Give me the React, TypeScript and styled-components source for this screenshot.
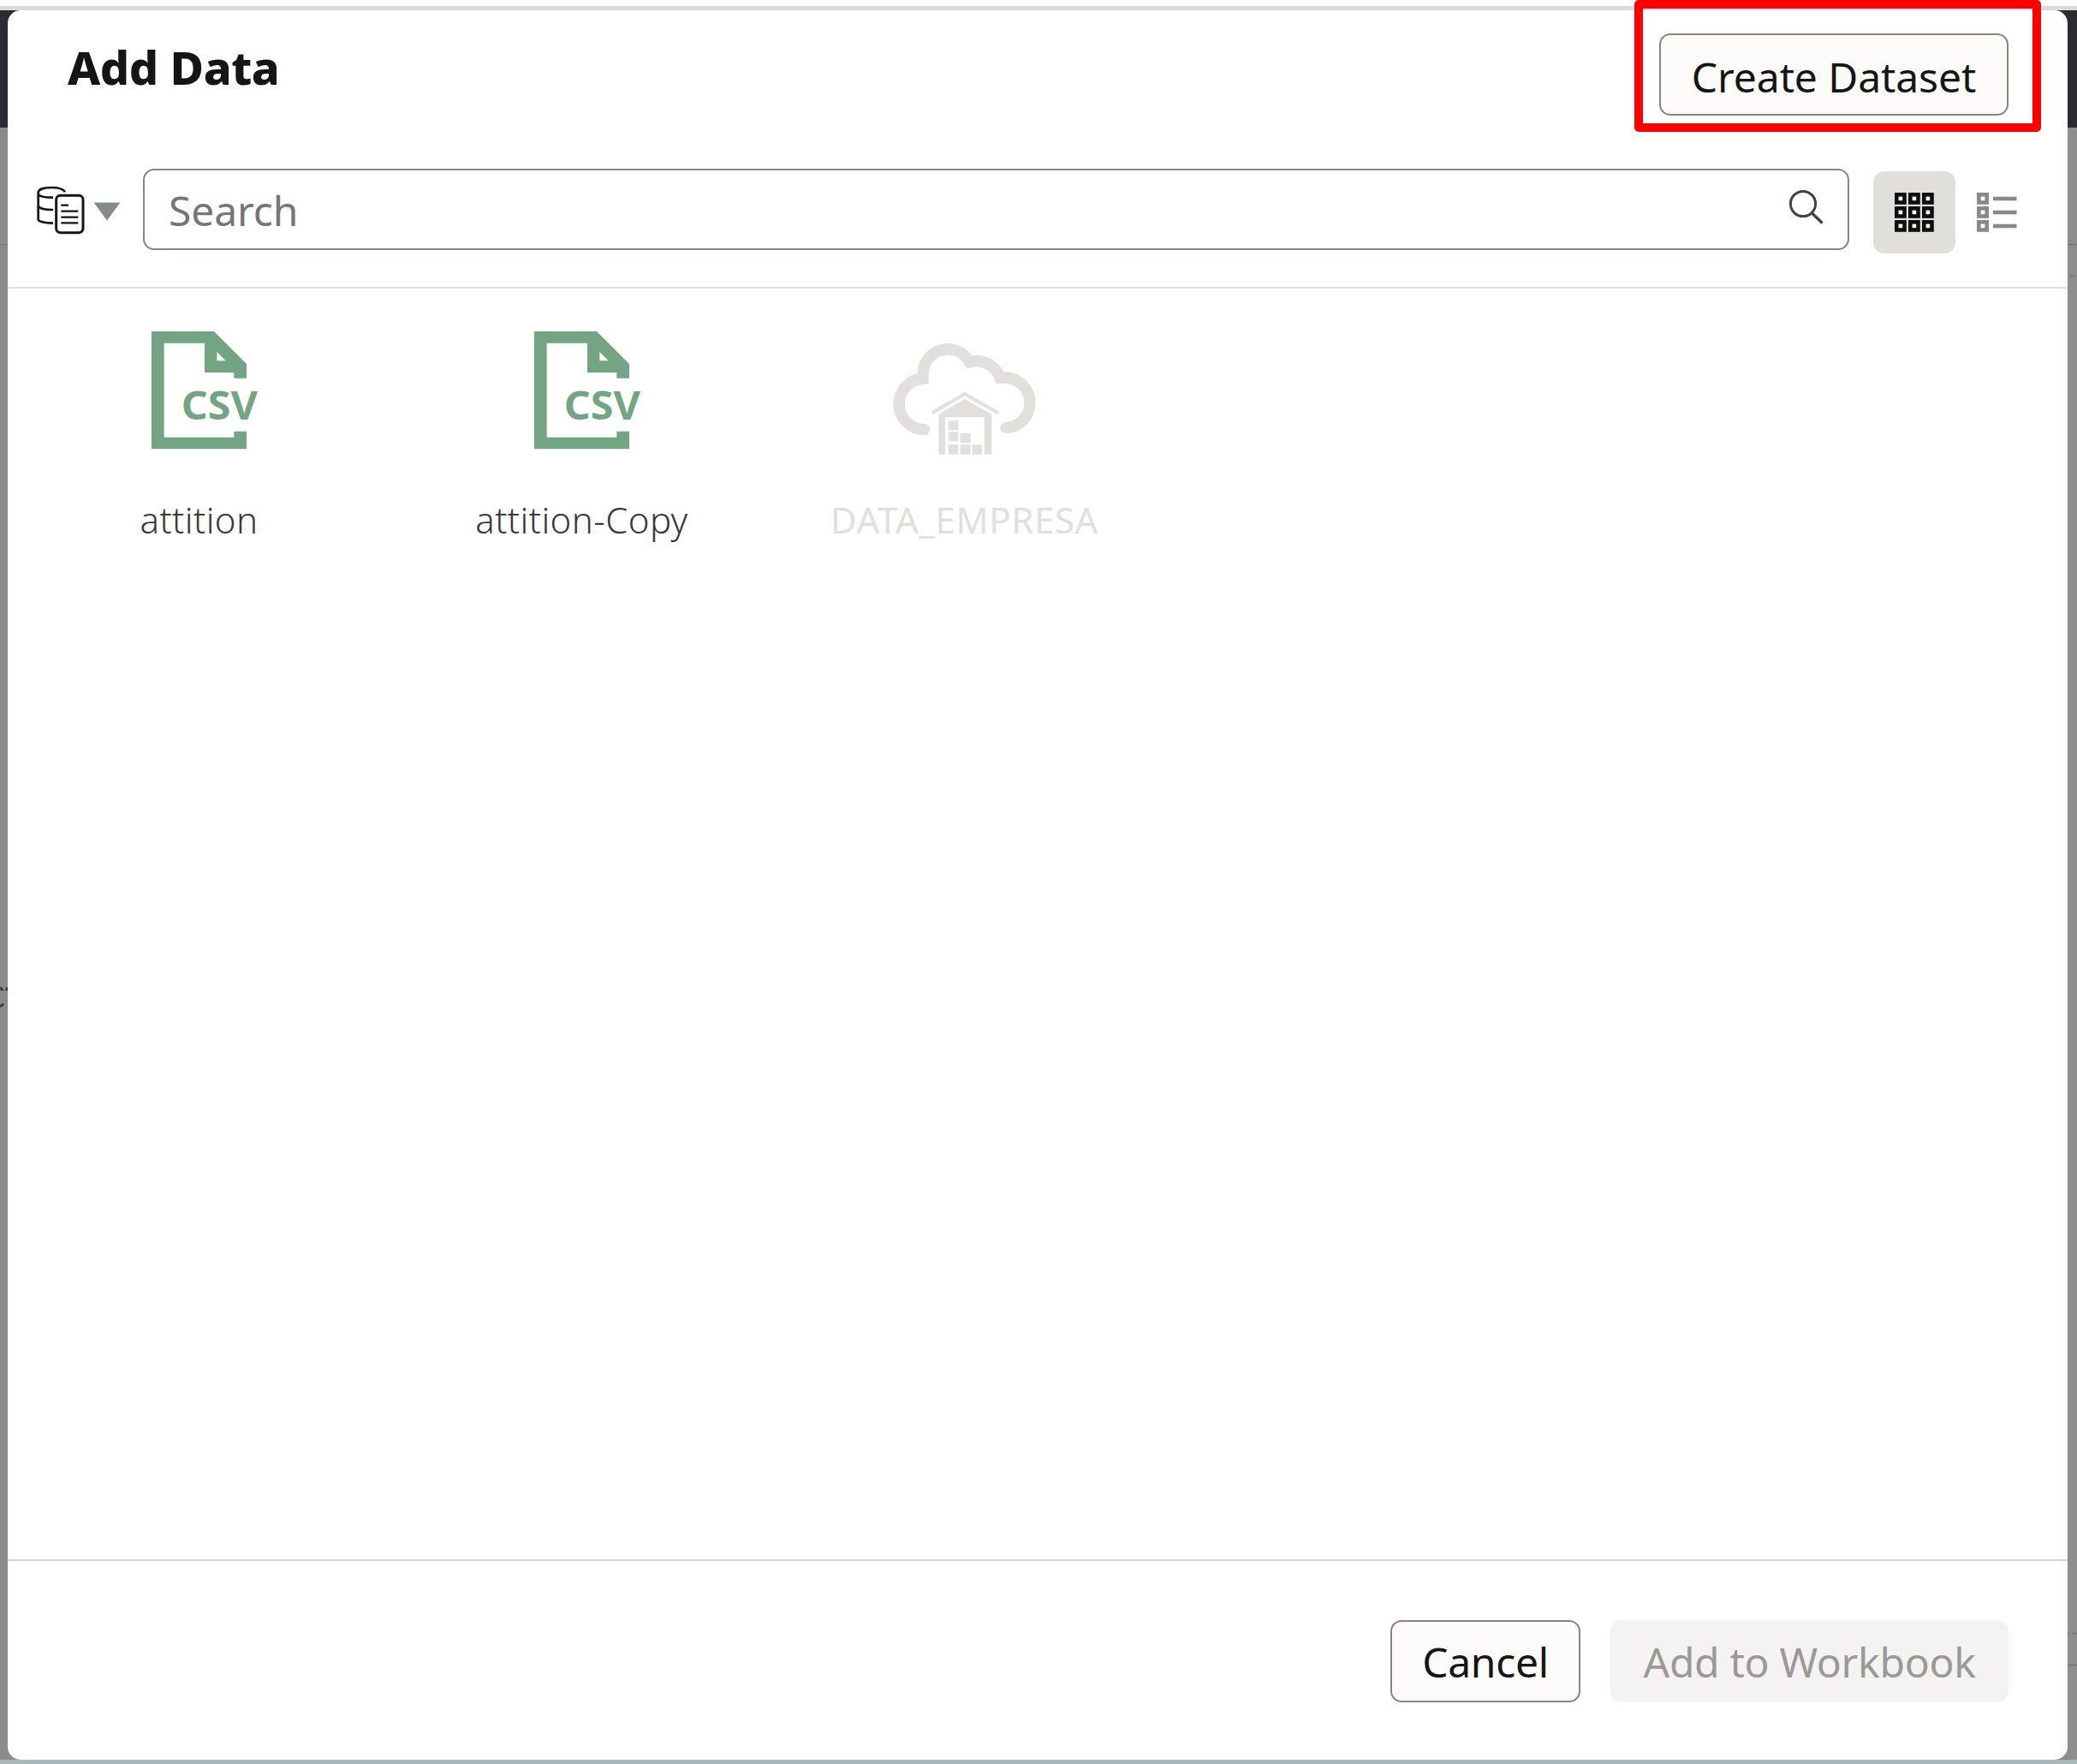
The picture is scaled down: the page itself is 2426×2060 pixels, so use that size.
import React from 'react';
import styled, { createGlobalStyle } from 'styled-components';

const GlobalStyle = createGlobalStyle`
  * { box-sizing: border-box; }
  body { margin: 0; background: #fff; }
  button, input { font: inherit; }
`;

const Page = styled.div`
  display: flex;
  flex-direction: column;
  width: 2426px;
  height: 2060px;
  overflow: hidden;
  font-family: 'Noto Sans', 'Open Sans', sans-serif;
  color: #161513;
`;

const TopStrip = styled.div`
  height: 12px;
  flex: none;
  background: #fff;
  border-bottom: 5px solid #d9dcdb;
`;

const BottomStrip = styled.div`
  height: 5px;
  flex: none;
  background: #a8b7bb;
`;

const Backdrop = styled.div`
  flex: 1;
  min-height: 0;
  display: flex;
  background: linear-gradient(#2b2c31 0 137px, #8c8b88 137px);
`;

const Gutter = styled.svg<{ $width: number }>`
  flex: none;
  width: ${p => p.$width}px;
  height: 2043px;
`;

const Dialog = styled.section`
  flex: 1;
  display: flex;
  flex-direction: column;
  background: #fff;
  border-radius: 15px;
`;

const Header = styled.header`
  display: flex;
  justify-content: space-between;
  align-items: flex-start;
  height: 185px;
  padding: 27px 69px 0 70px;
`;

const Title = styled.h1`
  margin: 2px 0 0;
  font-size: 54px;
  line-height: 74px;
  font-weight: 850;
  letter-spacing: -0.4px;
`;

const Highlight = styled.div`
  position: absolute;
  left: -29px;
  top: -39px;
  width: 475px;
  height: 154px;
  border: 10px solid #ff0000;
  border-radius: 5px;
  pointer-events: none;
`;

const HighlightAnchor = styled.div`
  position: relative;
`;

const Button = styled.button<{ $width: number; $shift?: number; $spacing?: number }>`
  display: flex;
  align-items: center;
  justify-content: center;
  width: ${p => p.$width}px;
  height: 96px;
  padding: ${p => p.$shift ?? 0}px 0 0;
  font-size: 48px;
  letter-spacing: ${p => p.$spacing ?? 0}px;
  white-space: nowrap;
  color: #161513;
  background: #fcfbfa;
  border: 2px solid #8b8580;
  border-radius: 13px;

  &:disabled {
    color: #9b9996;
    background: #f4f3f2;
    border-color: #f4f3f2;
  }
`;

const Toolbar = styled.div`
  display: flex;
  align-items: flex-start;
  height: 140px;
  border-bottom: 2px solid #e3e1dc;
`;

const TypeFilter = styled.div`
  display: flex;
  align-items: flex-start;
  width: 158px;
  padding: 19px 0 0 33px;
  gap: 9px;
`;

const Caret = styled.svg`
  width: 32px;
  height: 22px;
  margin-top: 20px;
`;

const SearchBox = styled.label`
  display: flex;
  align-items: center;
  justify-content: space-between;
  width: 1993px;
  height: 95px;
  padding: 0 27px 0 28px;
  border: 2px solid #8b8580;
  border-radius: 13px;
`;

const SearchText = styled.span`
  margin-top: 2px;
  font-size: 48px;
  letter-spacing: -0.1px;
  color: #777572;
`;

const SearchIcon = styled.svg`
  width: 42px;
  height: 42px;
  margin-top: -5px;
`;

const ViewButton = styled.div<{ $active?: boolean }>`
  display: flex;
  align-items: center;
  justify-content: center;
  width: 96px;
  height: 96px;
  margin-top: 3px;
  border-radius: 13px;
  background: ${p => (p.$active ? '#e1dfdb' : 'transparent')};
`;

const ViewSwitch = styled.div`
  display: flex;
  margin-left: 28px;
`;

const Tiles = styled.div`
  flex: 1;
  display: grid;
  grid-template-columns: repeat(3, 447px);
  align-content: start;
  padding-top: 50px;
`;

const Tile = styled.div<{ $disabled?: boolean }>`
  display: flex;
  flex-direction: column;
  align-items: center;
  color: ${p => (p.$disabled ? '#e2e0dc' : '#3a3938')};
  font-weight: ${p => (p.$disabled ? 400 : 350)};
`;

const TileIcon = styled.div`
  display: flex;
  justify-content: center;
  height: 138px;
`;

const TileLabel = styled.div<{ $spacing: number }>`
  margin-top: 52px;
  font-size: 42px;
  line-height: 60px;
  letter-spacing: ${p => p.$spacing}px;
  white-space: nowrap;
`;

const Footer = styled.footer`
  display: flex;
  justify-content: flex-end;
  gap: 35px;
  height: 234px;
  padding: 69px 69px 0 0;
  border-top: 2px solid #d6d2cd;
`;

const DataTypeIcon = () => (
  <svg width="58" height="58" viewBox="126 648 174 174" fill="none" stroke="#161513" strokeWidth="8">
    <path d="M228 672C220 661 202 657 181 657C155 657 134 663 134 675V768C134 776 156 782 186 782" />
    <path d="M135 682C140 688 159 692 186 692M135 723C140 731 159 735 186 735" />
    <rect x="197" y="685" width="94" height="130" rx="14" fill="#fff" strokeWidth="9" />
    <path d="M214 719H240M214 740H274M214 761H274M214 781H274" strokeWidth="7" />
  </svg>
);

const CELLS = [0, 16, 32];

const GridIcon = () => (
  <svg width="46" height="46" viewBox="0 0 46 46">
    {CELLS.flatMap(y =>
      CELLS.map(x => (
        <rect key={`${x}-${y}`} x={x + 2.3} y={y + 2.3} width="9.2" height="9.2" fill="#fff" stroke="#0f0f0e" strokeWidth="4.6" />
      )),
    )}
  </svg>
);

const ListIcon = () => (
  <svg width="47" height="46" viewBox="0 0 47 46">
    {CELLS.map(y => (
      <g key={y}>
        <rect x="2.3" y={y + 2.3} width="9.4" height="9.2" fill="#fff" stroke="#86898b" strokeWidth="4.6" />
        <path d={`M19 ${y + 7}H46.5`} stroke="#86898b" strokeWidth="4.6" />
      </g>
    ))}
  </svg>
);

const CsvIcon = () => (
  <svg width="111.333" height="138" viewBox="111 83 334 414" overflow="visible" fill="#73a582">
    <path
      fillRule="evenodd"
      d="M111 83H330L444 197V247H400V227H297V124H155V454H400V433H444V495H111ZM340 155V186H371Z"
    />
    <text
      x="215"
      y="391"
      fontFamily="'Noto Sans', sans-serif"
      fontSize="139"
      fontWeight="700"
      textLength="268"
      lengthAdjust="spacingAndGlyphs"
    >
      CSV
    </text>
  </svg>
);

const CloudWarehouseIcon = () => (
  <svg width="171.333" height="138" viewBox="301 83 514 414" overflow="visible" fill="none" stroke="#e2e0dc">
    <g strokeWidth="40" strokeLinecap="round" strokeLinejoin="miter">
      <path d="M417 427A89.600 89.600 0 0 1 412 248V232A87 87 0 0 1 575 190A88 88 0 0 1 682 245H700A88.050 88.050 0 0 1 703 421" />
    </g>
    <path d="M444 369L558 302L676 369" strokeWidth="12" />
    <g fill="#e2e0dc" stroke="none">
      <path d="M467 373L558 320L653 373V514H627V384H490V514H467Z" />
      <path d="M501 396h35v32h-35ZM501 435h35v33h-35ZM543 440h36v34h-36ZM501 480h35v34h-35ZM543 480h36v34h-36ZM585 480h33v34h-33Z" />
    </g>
  </svg>
);

const datasets = [
  { name: 'attition', icon: CsvIcon, spacing: 0.4 },
  { name: 'attition-Copy', icon: CsvIcon, spacing: 0.4 },
  { name: 'DATA_EMPRESA', icon: CloudWarehouseIcon, spacing: 0.6, disabled: true },
];

export default function App() {
  return (
    <Page>
      <GlobalStyle />
      <TopStrip />
      <Backdrop>
        <Gutter $width={9} viewBox="0 0 9 2043">
          <path d="M0 273.5H9" stroke="#75736f" />
          <path d="M0 1142q2 0 3 3M0 1163q2 0 4-3" stroke="#33405c" strokeWidth="3" fill="none" />
          <path d="M6.500 1143H9" stroke="#59332e" strokeWidth="4" />
        </Gutter>
        <Dialog>
          <Header>
            <Title>Add Data</Title>
            <HighlightAnchor>
              <Button $width={408} $shift={5} $spacing={-0.1}>Create Dataset</Button>
              <Highlight />
            </HighlightAnchor>
          </Header>
          <Toolbar>
            <TypeFilter>
              <DataTypeIcon />
              <Caret viewBox="0 0 32 22">
                <path d="M0.500 0.500H31.500L16 21.500Z" fill="#868a8d" />
              </Caret>
            </TypeFilter>
            <SearchBox>
              <SearchText>Search</SearchText>
              <SearchIcon viewBox="0 0 42 42" fill="none" stroke="#45413d" strokeWidth="3">
                <circle cx="17" cy="17" r="14.600" />
                <path d="M27 27.500L39.500 39.500" strokeWidth="3.400" />
              </SearchIcon>
            </SearchBox>
            <ViewSwitch>
              <ViewButton $active>
                <GridIcon />
              </ViewButton>
              <ViewButton>
                <ListIcon />
              </ViewButton>
            </ViewSwitch>
          </Toolbar>
          <Tiles>
            {datasets.map(({ name, icon: Icon, spacing, disabled }) => (
              <Tile key={name} $disabled={disabled}>
                <TileIcon>
                  <Icon />
                </TileIcon>
                <TileLabel $spacing={spacing}>{name}</TileLabel>
              </Tile>
            ))}
          </Tiles>
          <Footer>
            <Button $width={222} $spacing={-0.3}>Cancel</Button>
            <Button $width={465} $spacing={-0.3} disabled>Add to Workbook</Button>
          </Footer>
        </Dialog>
        <Gutter $width={11} viewBox="0 0 11 2043">
          <path d="M0 137H11V2043H0Z" fill="#8e8e8d" />
          <path d="M0 273.500H11M3 310.500H9M0 1932.500H11M0 1895.500H2M5 1895.500H11" stroke="#757472" strokeWidth="1.500" />
        </Gutter>
      </Backdrop>
      <BottomStrip />
    </Page>
  );
}
